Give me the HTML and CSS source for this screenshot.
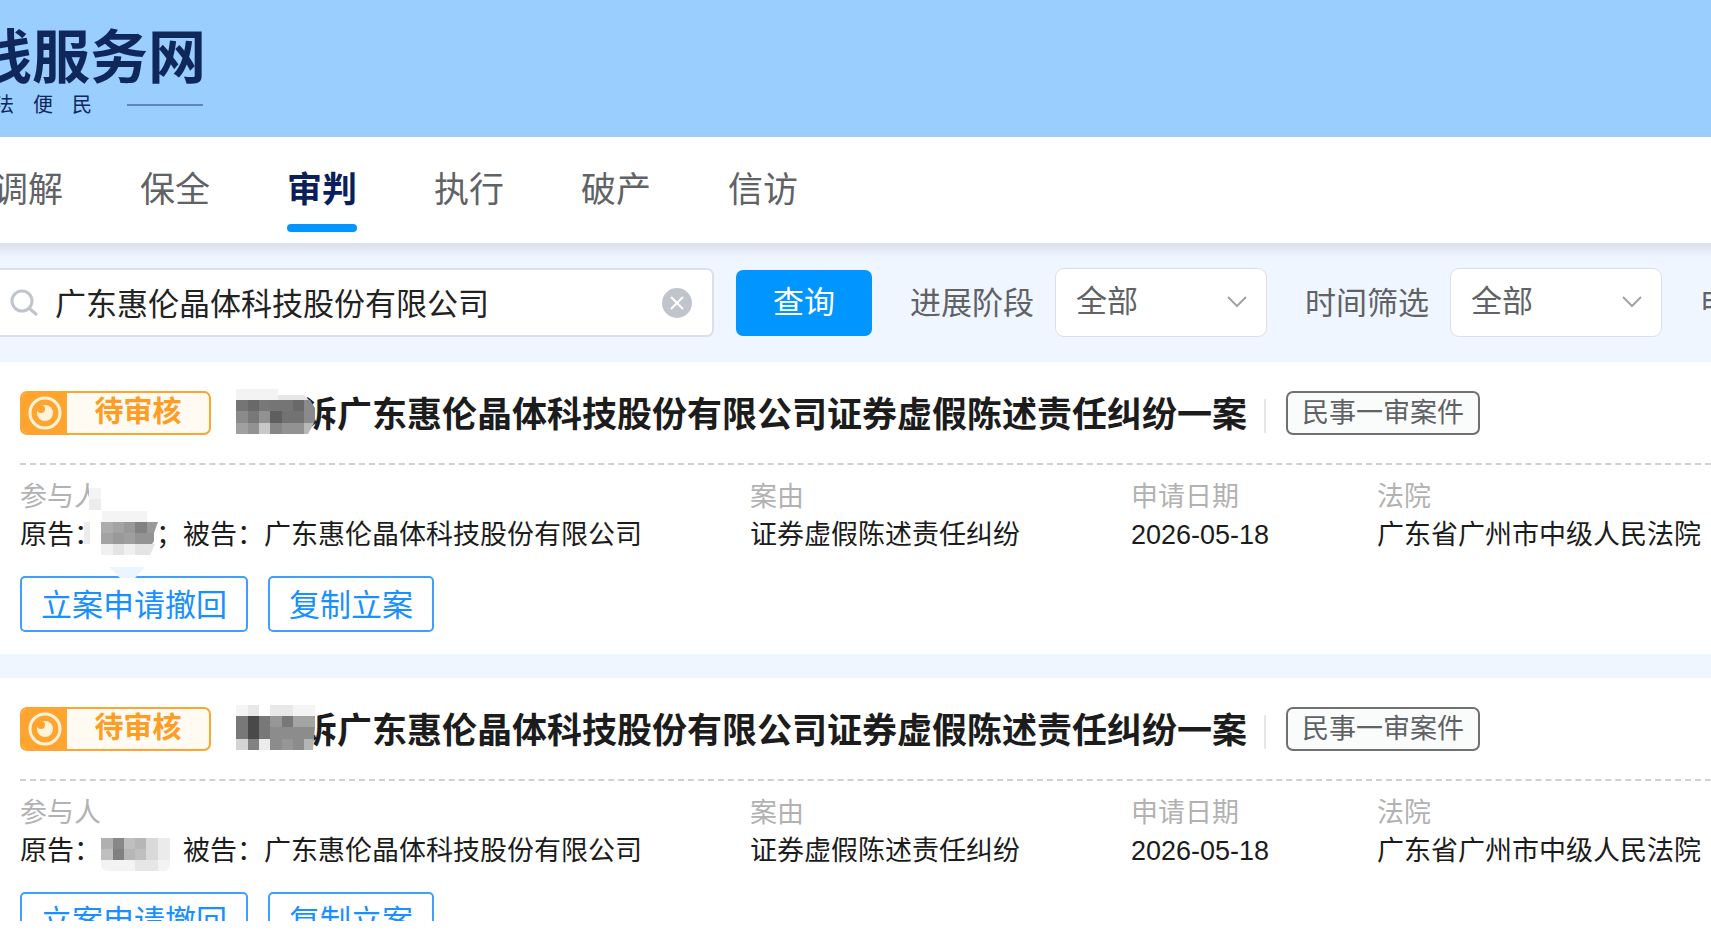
FILE: index.html
```html
<!DOCTYPE html>
<html lang="zh-CN">
<head>
<meta charset="utf-8">
<title>在线服务网</title>
<link rel="stylesheet" href="styles.css">
</head>
<body>
<div class="page">
<header class="banner">
  <div class="brand">
    <div class="brand-name">线服务网</div>
    <div class="brand-motto"><span>法</span><span>便</span><span>民</span><i class="motto-rule"></i></div>
  </div>
</header>
<nav class="tabs">
  <a class="tab" href="#tiaojie">调解</a>
  <a class="tab" href="#baoquan">保全</a>
  <a class="tab active" href="#shenpan" aria-current="page">审判</a>
  <a class="tab" href="#zhixing">执行</a>
  <a class="tab" href="#pochan">破产</a>
  <a class="tab" href="#xinfang">信访</a>
</nav>
<form class="filters">
  <div class="search">
    <svg class="search-icon" viewBox="0 0 28 28" aria-hidden="true"><circle cx="12" cy="12" r="10"/><path d="M19 19l8 7"/></svg>
    <input class="search-input" type="text" aria-label="搜索案件" value="广东惠伦晶体科技股份有限公司">
    <button class="clear" type="button" aria-label="清空"><svg viewBox="0 0 30 30"><circle cx="15" cy="15" r="15"/><path d="M9 9l12 12M21 9L9 21"/></svg></button>
  </div>
  <button class="query" type="button">查询</button>
  <div class="filter">
    <label for="stage">进展阶段</label>
    <div class="select-box">
      <select id="stage"><option>全部</option></select>
      <svg class="chevron" viewBox="0 0 20 12" aria-hidden="true"><path d="M1 1l9 9 9-9"/></svg>
    </div>
  </div>
  <div class="filter">
    <label for="time">时间筛选</label>
    <div class="select-box">
      <select id="time"><option>全部</option></select>
      <svg class="chevron" viewBox="0 0 20 12" aria-hidden="true"><path d="M1 1l9 9 9-9"/></svg>
    </div>
  </div>
  <div class="filter-more">申</div>
</form>
<main class="cases">
  <article class="case">
    <div class="case-head">
      <div class="status"><span class="status-icon"><svg viewBox="0 0 34 34" aria-hidden="true"><circle class="ring" cx="17" cy="17" r="15"/><circle class="eye" cx="17" cy="17" r="8"/><circle class="glint" cx="13" cy="13" r="4"/></svg></span><span class="status-text">待审核</span></div>
      <h2 class="case-title"><span class="mask-name"><svg class="mosaic" width="80" height="46" viewBox="0 0 80 46" aria-hidden="true">
        <path fill="#f3f3f3" d="M0 0h42v12H0z"/><path fill="#e6e6e6" d="M42 6h26l6 6H42z"/>
        <path fill="#757575" d="M0 11h12v11H0zM34 11h23v11H34z"/><path fill="#696969" d="M12 11h11v11H12zM57 11h11v11H57z"/><path fill="#787878" d="M23 11h11v11H23zM12 22h11v12H12z"/><path fill="#8a8a8a" d="M68 11h6l5 8v3H68zM0 22h12v12H0zM68 22h11v9l-1 3H68z"/>
        <path fill="#929292" d="M23 22h11v12H23zM12 34h11v11H12zM46 34h22v11H46z"/><path fill="#5f5f5f" d="M34 22h12v12H34z"/><path fill="#727272" d="M46 22h22v12H46z"/>
        <path fill="#a0a0a0" d="M0 34h12v11H0z"/><path fill="#c8c8c8" d="M23 34h11v11H23z"/><path fill="#868686" d="M34 34h12v11H34z"/><path fill="#b8b8b8" d="M68 34h10l-6 11h-4z"/>
      </svg></span>诉广东惠伦晶体科技股份有限公司证券虚假陈述责任纠纷一案</h2>
      <span class="case-type">民事一审案件</span>
    </div>
    <dl class="facts">
      <div class="fact"><dt>参与人</dt><dd>原告：<span class="mask-party"><svg class="mosaic" width="76" height="90" viewBox="0 0 76 90" aria-hidden="true">
        <path fill="#f4f4f4" d="M5 0h12v22H5zM18 23h45v11H18z"/><path fill="#ececec" d="M0 34h6v22H0zM5 11h12v11H5z"/>
        <path fill="#acacac" d="M17 34h12v11H17z"/><path fill="#a3a3a3" d="M29 34h11v11H29zM17 45h12v11H17z"/><path fill="#999" d="M40 34h11v11H40zM29 45h11v11H29zM63 34h11l-4 11h-7z"/><path fill="#828282" d="M51 34h12v11H51z"/><path fill="#9f9f9f" d="M40 45h11v11H40z"/><path fill="#939393" d="M51 45h19v8l-2 3H51z"/>
        <path fill="#f0f0f0" d="M17 56h12v11H17zM40 56h11v11H40z"/><path fill="#e4e4e4" d="M29 56h11v11H29zM51 56h20l-5 11H51z"/><path fill="#ecf4ff" d="M25 79h36l-10 11H36z"/>
      </svg></span>；被告：广东惠伦晶体科技股份有限公司</dd></div>
      <div class="fact"><dt>案由</dt><dd>证券虚假陈述责任纠纷</dd></div>
      <div class="fact"><dt>申请日期</dt><dd>2026-05-18</dd></div>
      <div class="fact"><dt>法院</dt><dd>广东省广州市中级人民法院</dd></div>
    </dl>
    <div class="actions"><button type="button">立案申请撤回</button><button type="button">复制立案</button></div>
  </article>
  <article class="case">
    <div class="case-head">
      <div class="status"><span class="status-icon"><svg viewBox="0 0 34 34" aria-hidden="true"><circle class="ring" cx="17" cy="17" r="15"/><circle class="eye" cx="17" cy="17" r="8"/><circle class="glint" cx="13" cy="13" r="4"/></svg></span><span class="status-text">待审核</span></div>
      <h2 class="case-title"><span class="mask-name"><svg class="mosaic" width="80" height="46" viewBox="0 0 80 46" aria-hidden="true">
        <path fill="#f4f4f4" d="M0 0h12v11H0zM57 0h22v11H57z"/><path fill="#e8e8e8" d="M12 0h11v11H12zM34 0h23v11H34z"/>
        <path fill="#787878" d="M0 11h12v23H0zM23 11h11v23H23zM46 11h11v11H46z"/><path fill="#494949" d="M12 11h11v23H12z"/><path fill="#969696" d="M34 11h12v11H34zM46 34h11v11H46z"/><path fill="#a4a4a4" d="M57 11h22v11H57z"/>
        <path fill="#8c8c8c" d="M34 22h45l-1 12H34zM34 34h12v11H34zM57 34h11v11H57z"/><path fill="#d4d4d4" d="M0 34h12v11H0z"/><path fill="#828282" d="M12 34h11v11H12z"/><path fill="#ebebeb" d="M23 34h11v11H23z"/><path fill="#b5b5b5" d="M68 34h10l-1 11h-9z"/>
      </svg></span>诉广东惠伦晶体科技股份有限公司证券虚假陈述责任纠纷一案</h2>
      <span class="case-type">民事一审案件</span>
    </div>
    <dl class="facts">
      <div class="fact"><dt>参与人</dt><dd>原告：<span class="mask-party wide"><svg class="mosaic" width="86" height="90" viewBox="0 0 86 90" aria-hidden="true">
        <path fill="#b0b0b0" d="M17 34h12v11H17z"/><path fill="#888" d="M29 34h11v11H29z"/><path fill="#bfbfbf" d="M40 34h11v11H40zM51 45h11v11H51zM17 45h12v11H17z"/><path fill="#b6b6b6" d="M51 34h11v11H51zM40 45h11v11H40z"/><path fill="#808080" d="M29 45h11v11H29z"/><path fill="#d9d9d9" d="M62 34h12v22H62z"/><path fill="#ebebeb" d="M74 34h12v22H74z"/>
        <path fill="#f3f3f3" d="M17 56h34v11H24q-5 0-7-5zM74 56h12v5q-1 6-7 6h-5z"/><path fill="#e6e6e6" d="M51 56h23v11H51z"/>
      </svg></span>被告：广东惠伦晶体科技股份有限公司</dd></div>
      <div class="fact"><dt>案由</dt><dd>证券虚假陈述责任纠纷</dd></div>
      <div class="fact"><dt>申请日期</dt><dd>2026-05-18</dd></div>
      <div class="fact"><dt>法院</dt><dd>广东省广州市中级人民法院</dd></div>
    </dl>
    <div class="actions"><button type="button">立案申请撤回</button><button type="button">复制立案</button></div>
  </article>
</main>
</div>
</body>
</html>
```
FILE: styles.css
```css
* {
  box-sizing: border-box;
}

body {
  margin: 0;
  background: #fff;
  color: #1c1c1c;
  font-family: "Liberation Sans", "Noto Sans CJK SC", sans-serif;
  overflow: hidden;
}

button,
input,
select {
  font-family: inherit;
}

.page {
  height: calc(100vh - 15px);
  overflow: hidden;
  background: #f0f6ff;
}

/* banner */
.banner {
  height: 137px;
  padding-top: 26px;
  background: #99ceff;
  color: #10275c;
}

.brand {
  width: 206px;
}

.brand-name {
  display: flex;
  justify-content: flex-end;
  font-size: 58px;
  line-height: 64px;
  font-weight: 700;
  white-space: nowrap;
}

.brand-motto {
  display: flex;
  align-items: center;
  gap: 19px;
  margin-left: -6px;
  font-size: 20px;
  line-height: 30px;
}

.motto-rule {
  width: 76px;
  height: 2px;
  margin-left: 16px;
  background: #5f86b8;
}

/* tabs */
.tabs {
  display: flex;
  gap: 77px;
  height: 106px;
  margin: 0 -20px;
  padding: 26px 20px 0 13px;
  background: #fff;
  box-shadow: 0 5px 10px 2px rgba(90, 80, 110, 0.14);
  clip-path: inset(0 0 -24px 0);
}

.tab {
  position: relative;
  height: 69px;
  color: #606266;
  font-size: 35px;
  line-height: 54px;
  text-decoration: none;
  white-space: nowrap;
}

.tab.active {
  color: #0b1f5c;
  font-weight: 700;
}

.tab.active::after {
  content: "";
  position: absolute;
  left: 0;
  right: 0;
  bottom: 0;
  height: 8px;
  border-radius: 4px;
  background: #0095ff;
}

/* filters */
.filters {
  display: flex;
  align-items: center;
  gap: 38px;
  height: 119px;
  color: #606266;
  font-size: 31px;
  white-space: nowrap;
}

.search {
  display: flex;
  flex: 1;
  align-items: center;
  min-width: 0;
  height: 69px;
  margin-right: -16px;
  padding: 0 20px 0 10px;
  border: 2px solid #dcdfe9;
  border-left: 0;
  border-radius: 0 7px 7px 0;
  background: #fff;
}

.search-icon {
  flex: none;
  width: 28px;
  height: 28px;
  fill: none;
  stroke: #c0c4cc;
  stroke-width: 3;
}

.search-input {
  flex: 1;
  min-width: 0;
  padding: 0 0 2px 17px;
  border: 0;
  outline: 0;
  background: none;
  color: #222;
  font-size: 31px;
}

.clear {
  flex: none;
  width: 30px;
  height: 30px;
  padding: 0;
  border: 0;
  background: none;
}

.clear svg {
  display: block;
  fill: #c0c4cc;
}

.clear path {
  stroke: #fff;
  stroke-width: 2;
}

.query {
  flex: none;
  width: 136px;
  height: 66px;
  padding: 0 0 6px;
  border: 0;
  border-radius: 7px;
  background: #0095ff;
  color: #fff;
  font-size: 31px;
}

.filter {
  display: flex;
  flex: none;
  align-items: center;
  gap: 21px;
}

.filter label,
.filter-more {
  padding-bottom: 4px;
}

.select-box {
  position: relative;
  width: 212px;
}

.select-box select {
  display: block;
  width: 100%;
  height: 69px;
  padding: 0 20px 3px;
  border: 1px solid #dcdfe6;
  border-radius: 9px;
  background: #fff;
  color: #606266;
  font-size: 31px;
  appearance: none;
}

.chevron {
  position: absolute;
  top: 28px;
  right: 20px;
  width: 20px;
  height: 12px;
  fill: none;
  stroke: #a0a4aa;
  stroke-width: 2;
  pointer-events: none;
}

.filter-more {
  flex: 0 0 11px;
  min-width: 0;
}

/* case list */
.cases {
  display: flex;
  flex-direction: column;
  gap: 24px;
}

.case {
  padding: 29px 0 22px 20px;
  background: #fff;
}

.case-head {
  display: flex;
  align-items: center;
  height: 74px;
  padding-bottom: 28px;
  border-bottom: 2px dashed #d0d0d0;
  white-space: nowrap;
}

.status {
  display: flex;
  flex: none;
  width: 191px;
  height: 44px;
  border: 2px solid #ffa42f;
  border-radius: 7px;
  background: #fffaf2;
  overflow: hidden;
}

.status-icon {
  display: flex;
  align-items: center;
  justify-content: center;
  width: 45px;
  background: #ffa42f;
}

.status-icon svg {
  width: 34px;
  height: 34px;
}

.ring {
  fill: none;
  stroke: #fff3dc;
  stroke-width: 3;
}

.eye {
  fill: #fff3dc;
}

.glint {
  fill: #ffa42f;
}

.status-text {
  flex: 1;
  color: #ff9c23;
  font-size: 29px;
  font-weight: 700;
  line-height: 38px;
  text-align: center;
}

.case-title {
  display: flex;
  align-items: center;
  margin: 0 0 0 25px;
  padding-top: 4px;
  font-size: 35px;
  font-weight: 700;
  line-height: 44px;
}

.mask-name,
.mask-party {
  position: relative;
  display: inline-block;
}

.mask-name {
  width: 66px;
  height: 44px;
}

.mosaic {
  position: absolute;
}

.mask-name .mosaic {
  top: -4px;
  left: 0;
}

.case-type {
  position: relative;
  margin-left: 39px;
  padding: 0 14px;
  border: 2px solid #707070;
  border-radius: 7px;
  background: #fafcfc;
  color: #606266;
  font-size: 27px;
  line-height: 40px;
}

.case-type::before {
  content: "";
  position: absolute;
  top: 6px;
  left: -24px;
  width: 2px;
  height: 34px;
  background: #e4e6ea;
}

/* case facts */
.facts {
  display: grid;
  grid-template-columns: 730fr 381fr 246fr 334fr;
  margin: 0;
  padding-top: 13px;
  font-size: 27px;
  line-height: 38px;
  white-space: nowrap;
}

.fact {
  min-width: 0;
}

.facts dt {
  height: 38px;
  color: #b2b2b2;
}

.facts dd {
  height: 38px;
  margin: 0;
}

.mask-party {
  width: 55px;
  height: 27px;
}

.mask-party.wide {
  width: 82px;
}

.mask-party .mosaic {
  top: -29px;
  left: -17px;
}

.actions {
  display: flex;
  gap: 20px;
  padding-top: 22px;
}

.actions button {
  height: 56px;
  padding: 0 19px 4px;
  border: 2px solid #409eff;
  border-radius: 5px;
  background: #fff;
  color: #1890ff;
  font-size: 31px;
}
```
